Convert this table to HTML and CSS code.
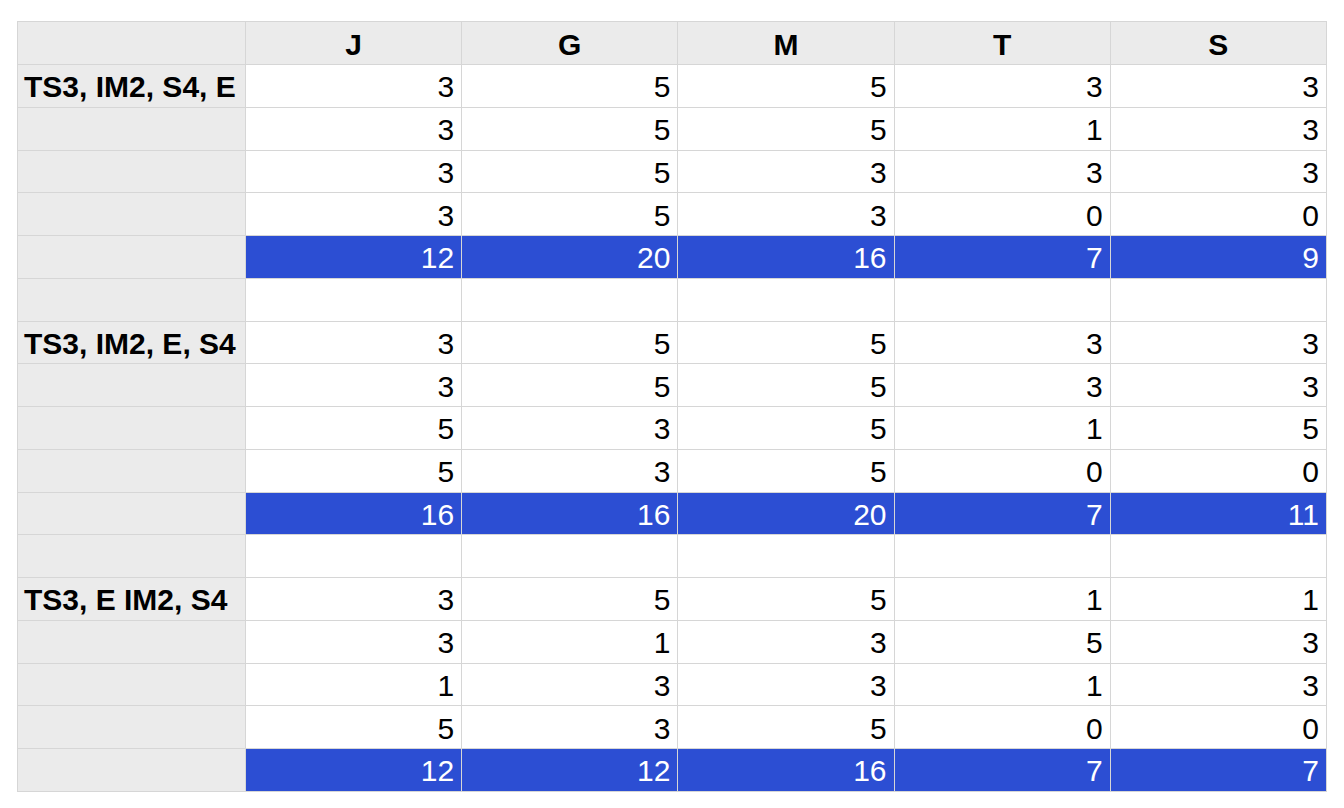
FILE: index.html
```html
<!DOCTYPE html>
<html>
<head>
<meta charset="utf-8">
<link rel="stylesheet" href="styles.css">
</head>
<body>
<table class="sheet">
  <thead>
    <tr class="head-row">
      <th class="label"></th><th>J</th><th>G</th><th>M</th><th>T</th><th>S</th>
    </tr>
  </thead>
  <tbody>
    <tr><th class="label">TS3, IM2, S4, E</th><td>3</td><td>5</td><td>5</td><td>3</td><td>3</td></tr>
    <tr><th class="label"></th><td>3</td><td>5</td><td>5</td><td>1</td><td>3</td></tr>
    <tr><th class="label"></th><td>3</td><td>5</td><td>3</td><td>3</td><td>3</td></tr>
    <tr><th class="label"></th><td>3</td><td>5</td><td>3</td><td>0</td><td>0</td></tr>
    <tr class="total"><th class="label"></th><td>12</td><td>20</td><td>16</td><td>7</td><td>9</td></tr>
    <tr><th class="label"></th><td></td><td></td><td></td><td></td><td></td></tr>
    <tr><th class="label">TS3, IM2, E, S4</th><td>3</td><td>5</td><td>5</td><td>3</td><td>3</td></tr>
    <tr><th class="label"></th><td>3</td><td>5</td><td>5</td><td>3</td><td>3</td></tr>
    <tr><th class="label"></th><td>5</td><td>3</td><td>5</td><td>1</td><td>5</td></tr>
    <tr><th class="label"></th><td>5</td><td>3</td><td>5</td><td>0</td><td>0</td></tr>
    <tr class="total"><th class="label"></th><td>16</td><td>16</td><td>20</td><td>7</td><td>11</td></tr>
    <tr><th class="label"></th><td></td><td></td><td></td><td></td><td></td></tr>
    <tr><th class="label">TS3, E IM2, S4</th><td>3</td><td>5</td><td>5</td><td>1</td><td>1</td></tr>
    <tr><th class="label"></th><td>3</td><td>1</td><td>3</td><td>5</td><td>3</td></tr>
    <tr><th class="label"></th><td>1</td><td>3</td><td>3</td><td>1</td><td>3</td></tr>
    <tr><th class="label"></th><td>5</td><td>3</td><td>5</td><td>0</td><td>0</td></tr>
    <tr class="total"><th class="label"></th><td>12</td><td>12</td><td>16</td><td>7</td><td>7</td></tr>
  </tbody>
</table>
</body>
</html>
```
FILE: styles.css
```css
html, body {
  margin: 0;
  padding: 0;
  background: #ffffff;
}

body {
  font-family: "Liberation Sans", Arial, Helvetica, sans-serif;
  font-size: 30px;
  color: #000000;
}

.sheet {
  border-collapse: collapse;
  margin: 21px 0 0 17px;
  table-layout: fixed;
  width: 1310px;
}

.sheet th,
.sheet td {
  border: 1px solid #d6d6d6;
  padding: 3px 7px 0;
  height: 38.76px;
  line-height: 1;
  white-space: nowrap;
  overflow: hidden;
}

.sheet td {
  text-align: right;
  background: #ffffff;
}

.sheet th {
  font-weight: bold;
  background: #ebebeb;
  text-align: center;
}

.sheet .label {
  width: 214px;
  padding-left: 6px;
  text-align: left;
  background: #ebebeb;
}

.head-row th {
  height: 39px;
}

.total td {
  background: #2c4ed3;
  color: #ffffff;
}
```
